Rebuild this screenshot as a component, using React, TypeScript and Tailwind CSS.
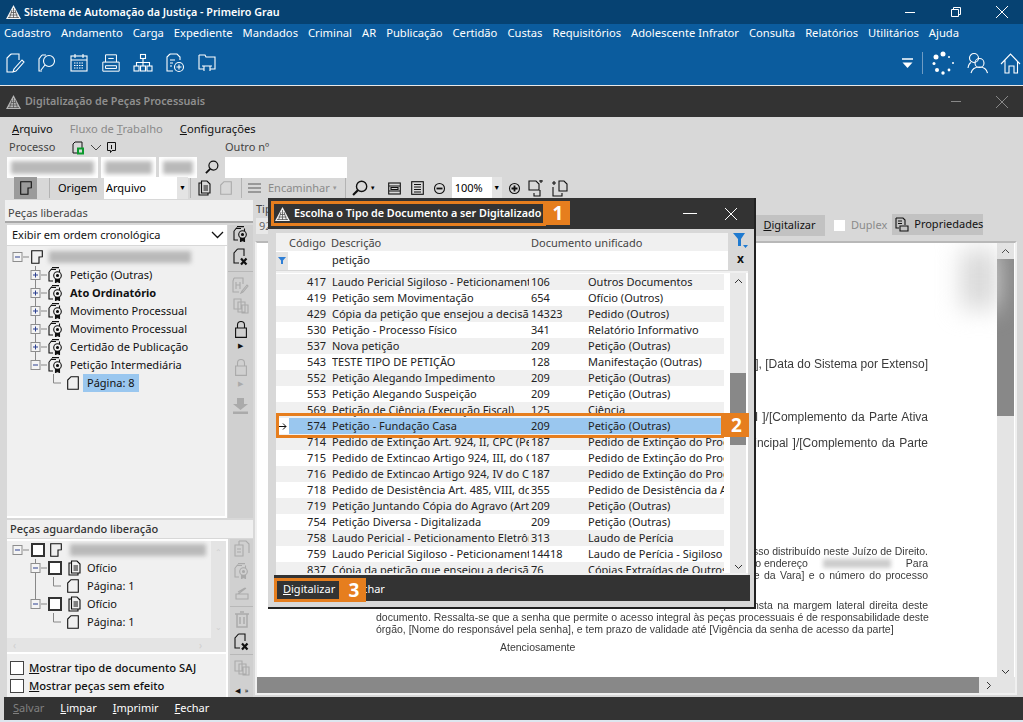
import React from "react";

const ui = "font-['Noto_Sans','Open_Sans',sans-serif]";

function Logo({ dim = false }: { dim?: boolean }) {
  const c = dim ? "#b5b5b5" : "#f2f2f2";
  return (
    <svg width="15" height="14" viewBox="0 0 15 14" className="shrink-0">
      <path d="M7.5 0 15 14H0Z" fill={c} />
      <path d="M5 7.5h5M3.5 10h8M2 12.5h11M6 5l-2.5 8M9 5l2.5 8M7.5 3v10" stroke="#555" strokeWidth="0.8" />
    </svg>
  );
}

function S({ w = 20, h = 20, vb = "0 0 20 20", c = "currentColor", children, sw = 1.1 }: any) {
  return (
    <svg width={w} height={h} viewBox={vb} fill="none" stroke={c} strokeWidth={sw} className="shrink-0">
      {children}
    </svg>
  );
}

const PageIcon = ({ c = "#111" }: { c?: string }) => (
  <S w={12} h={14} vb="0 0 12 14" c={c}>
    <path d="M4 .7h7.3v12.6H.7V4Z" />
  </S>
);
const FoldIcon = ({ c = "#111" }: { c?: string }) => (
  <S w={12} h={14} vb="0 0 12 14" c={c}>
    <path d="M.7.7h10.6v6L8 7v6.300H.7ZM8 7l3.300-.3" />
  </S>
);
const SealIcon = ({ c = "#111", w = 15 }: { c?: string; w?: number }) => (
  <S w={w} h={16} vb="0 0 15 16" c={c} sw={1.1}>
    <path d="M4 .6H11M2.500 2.500H8M1 5V14H5M1 5 4 1.500M11.500 2.500V5" />
    <circle cx="9.500" cy="8.500" r="3.800" />
    <circle cx="9.500" cy="8.500" r="1" fill={c} />
    <path d="M7.500 12v3.500l2-1 2 1V12" fill={c} />
  </S>
);
const StackIcon = () => (
  <S w={13} h={16} vb="0 0 13 16" c="#111" sw={1.1}>
    <path d="M3.500 1H9L12 4V13H3.500ZM3.500 3H1V15H10V13M5.500 6h4.500M5.500 8h4.500M5.500 10h4.500" />
  </S>
);
const DocX = ({ c = "#111" }: { c?: string }) => (
  <S w={16} h={18} vb="0 0 16 18" c={c}>
    <path d="M4.500 1H11V8M4.500 1 1 5V15H6" />
    <path d="M8 10.500l5.500 6M13.500 10.500l-5.500 6" strokeWidth="2.200" />
  </S>
);
const SearchIcon = ({ size = 15 }: { size?: number }) => (
  <S w={size} h={size} vb="0 0 15 15" c="#111" sw={1.3}>
    <circle cx="9" cy="6" r="4.800" />
    <path d="M5.500 9.500 1 14" strokeWidth="2" />
  </S>
);
const Lock = ({ c = "#111" }: { c?: string }) => (
  <S w={12} h={17} vb="0 0 12 17" c={c}>
    <path d="M2.500 7V4a3.500 3.500 0 0 1 7 0v3M.6 7h10.800v9.400H.6Z" />
  </S>
);

const Blur = ({ className }: { className: string }) => (
  <div className={"bg-[#b9b9b9] blur-[2px] " + className} />
);

const Box = ({ open, up, down }: { open: boolean; up?: boolean; down?: boolean }) => (
  <svg width="18" height="18" viewBox="0 0 18 18" fill="none" className="shrink-0">
    {up && <path d="M5.500 0V4" stroke="#888" />}
    {down && <path d="M5.500 14V18" stroke="#888" />}
    <path d="M11 9h6" stroke="#888" />
    <rect x="1" y="4.500" width="9" height="9" fill="#f4f4f4" stroke="#8d8d8d" />
    <path d="M3 9h5" stroke="#2b3f8f" />
    {!open && <path d="M5.500 6.500v5" stroke="#2b3f8f" />}
  </svg>
);

const Elbow = ({ line }: { line?: boolean }) => (
  <svg width="31" height="18" viewBox="0 0 31 18" fill="none" className="shrink-0">
    {line && <path d="M5.500 0V18" stroke="#888" />}
    <path d="M23.500 0V9H31" stroke="#888" />
  </svg>
);

const Check = () => <div className="w-[14px] h-[14px] bg-white border-2 border-[#333] shrink-0" />;

function TopMenu() {
  const items = ["Cadastro","Andamento","Carga","Expediente","Mandados","Criminal","AR","Publicação","Certidão","Custas","Requisitórios","Adolescente Infrator","Consulta","Relatórios","Utilitários","Ajuda"];
  return (
    <div className="h-[19px] bg-[#0b5c9e] flex items-center gap-[10px] pl-[4px] text-white text-[11.200px] whitespace-nowrap">
      {items.map((m) => <span key={m}>{m}</span>)}
    </div>
  );
}

function MainToolbar() {
  return (
    <div className="h-[42px] bg-[#0b5c9e] flex items-center pl-[5px] pr-[2px] pb-[2px] text-white gap-[12px]">
      <S w={20} h={20}><path d="M6 1h8v6M6 1 2 5v14h6M17 7 9 16l-1 3 3-1 8-9Z" /></S>
      <S w={20} h={20}><path d="M5 2h4M5 2 2 6v12h3" /><circle cx="12" cy="8" r="5.500" /><path d="M8 12l-4 5" /></S>
      <S w={20} h={20}><rect x="2" y="3" width="16" height="15" /><path d="M2 7h16M6 1v4M14 1v4" /><path d="M5 10h10M5 12.500h10M5 15h10" strokeDasharray="1.500 1" /></S>
      <S w={20} h={20} vb="0 0 22 22"><path d="M5 10V2h12v8M2 10h18v10H2ZM5 14h12v3H5ZM8 6h6" /></S>
      <S w={20} h={20}><rect x="7.500" y="1.500" width="5" height="4" /><rect x="1" y="13" width="5" height="5" /><rect x="7.500" y="13" width="5" height="5" /><rect x="14" y="13" width="5" height="5" /><path d="M10 5.500v7.500M3.500 13v-3.500h13V13" /></S>
      <S w={20} h={20}><path d="M5 1h7l3 3v3M5 1 2 4v14h6M5 7h5M5 10h3M5 13h2" /><circle cx="14" cy="14" r="4.500" /><path d="M14 11.500v5M11.500 14h5" /></S>
      <S w={20} h={20}><path d="M2 2h6l1 2h9v12h-5M2 2v14h5M7 18v-5h6v5M5 13h10" /></S>
      <div className="flex-1" />
      <S w={14} h={14} vb="0 0 14 14" c="white"><path d="M1 3h11" strokeWidth="1.500" /><path d="M1.500 6.500h10L6.500 12Z" fill="white" stroke="none" /></S>
      <div className="w-px h-[22px] bg-[#6f9cc4] -ml-[5px]" />
      <svg width="24" height="24" viewBox="0 0 24 24" fill="white" className="shrink-0 -ml-[4px]">
        <circle cx="12" cy="3" r="2.500" /><circle cx="5" cy="6" r="2.500" /><circle cx="3" cy="12.500" r="1.500" /><circle cx="6" cy="19" r="2" /><circle cx="12" cy="22" r="1.700" /><circle cx="18" cy="19" r="1.400" /><circle cx="22" cy="12" r="1" /><circle cx="18" cy="6" r="1" />
      </svg>
      <S w={21} h={22} vb="0 0 21 22"><circle cx="7" cy="6" r="4.500" /><circle cx="12.500" cy="11" r="4.500" /><path d="M1 16c.5-3 2-5 3-5.500M4 21c1-4 4-6 8.500-6s7 2 8 6" /></S>
      <S w={21} h={22} vb="0 0 21 22"><path d="M1 12 10.500 2 20 12M5 8.500V21h4v-7h5v7h3.500V9" /></S>
    </div>
  );
}

const Sep = () => <div className="w-px h-[20px] bg-[#b4b4b4] shrink-0" />;

function ZoomDot({ plus }: { plus?: boolean }) {
  return (
    <S w={13} h={13} vb="0 0 13 13" c="#111">
      <circle cx="6.500" cy="6.500" r="5" />
      <path d={plus ? "M3.500 6.500h6M6.500 3.500v6" : "M3.500 6.500h6"} strokeWidth="1.800" />
    </S>
  );
}

function FormArea() {
  return (
    <div className="h-[83px] flex flex-col">
      <div className="h-[23px] flex items-center pl-[12px] gap-[17px] text-[11.200px] text-[#111] pt-[2px]">
        <span><u>A</u>rquivo</span>
        <span className="text-[#8a8a8a]">Fluxo de <u>T</u>rabalho</span>
        <span><u>C</u>onfigurações</span>
      </div>
      <div className="h-[15px] flex items-center pl-[9px] text-[11px] text-[#444]">
        <span className="w-[63px]">Processo</span>
        <svg width="13" height="14" viewBox="0 0 13 14" fill="none" stroke="#111" className="shrink-0">
          <path d="M3 1h7v6M3 1 1 3v9h4" />
          <rect x="6" y="7.500" width="5" height="5" stroke="#0c9a2e" strokeWidth="2" />
        </svg>
        <svg width="13" height="8" viewBox="0 0 13 8" fill="none" stroke="#444" className="ml-[5px]"><path d="M1 1l5 5 5-5" /></svg>
        <svg width="10" height="12" viewBox="0 0 10 12" fill="none" stroke="#111" className="ml-[4px]"><path d="M.5.500h8v8H5l-1.500 2V8.500h-3ZM4.500 3v4" /></svg>
        <span className="ml-[108px]">Outro nº</span>
      </div>
      <div className="h-[22px] flex items-center pl-[7px] mt-[1px]">
        <div className="w-[91px] h-[21px] bg-white overflow-hidden p-[4px]"><Blur className="h-full" /></div>
        <div className="w-[55px] h-[21px] bg-white overflow-hidden p-[4px] ml-[3px]"><Blur className="h-full" /></div>
        <div className="w-[38px] h-[21px] bg-white overflow-hidden p-[4px] ml-[3px]"><Blur className="h-full" /></div>
        <div className="ml-[8px]"><SearchIcon size={14} /></div>
        <div className="w-[122px] h-[21px] bg-white ml-[6px]" />
      </div>
      <div className="h-[22px] flex items-center pl-[14px] text-[11px] -mt-px">
        <div className="w-[23px] h-[22px] bg-[#9b9b9b] flex items-center justify-center"><FoldIcon /></div>
        <div className="ml-[12px]"><Sep /></div>
        <span className="ml-[8px] w-[46px]">Origem</span>
        <div className="w-[84px] h-[22px] bg-white flex items-center pl-[2px] relative">
          Arquivo
          <div className="absolute right-0 top-0 bottom-0 w-[11px] bg-[#e4e4e4] flex items-center justify-center text-[7px]">▼</div>
        </div>
        <div className="ml-[2px]"><Sep /></div>
        <div className="ml-[7px]"><StackIcon /></div>
        <div className="ml-[9px]"><PageIcon c="#aaa" /></div>
        <div className="ml-[9px]"><Sep /></div>
        <svg width="13" height="10" viewBox="0 0 13 10" stroke="#999" strokeWidth="2" className="ml-[6px]"><path d="M0 1h13M0 5h13M0 9h13" /></svg>
        <span className="ml-[7px] text-[#8a8a8a] whitespace-nowrap">Encaminhar</span>
        <span className="text-[6px] text-[#999] ml-[2px]">▼</span>
        <div className="ml-[7px]"><Sep /></div>
        <div className="ml-[6px]"><SearchIcon size={16} /></div>
        <span className="text-[6px] ml-[2px]">▼</span>
        <div className="ml-[12px]"><S w={13} h={13} vb="0 0 13 13" c="#111"><rect x=".7" y="1" width="11.600" height="11" /><path d="M1 4h11M1 9h11M3 5.500h7v2H3Z" /></S></div>
        <div className="ml-[10px]"><S w={13} h={14} vb="0 0 13 14" c="#111"><rect x=".7" y=".7" width="11.600" height="12.600" /><path d="M3 3.500h7M3 6h7M3 8.500h7M3 11h7" /></S></div>
        <div className="ml-[9px]"><ZoomDot /></div>
        <div className="ml-[6px] w-[50px] h-[22px] bg-white flex items-center pl-[3px] relative">
          100%
          <div className="absolute right-0 top-0 bottom-0 w-[10px] bg-[#e4e4e4] flex items-center justify-center text-[7px]">▼</div>
        </div>
        <div className="ml-[6px]"><ZoomDot plus /></div>
        <div className="ml-[7px]"><S w={17} h={17} vb="0 0 17 17" c="#111"><path d="M1 1h7l3 3v6H1ZM12 10v6H6v-3M11 1h4M13 0v3" /></S></div>
        <div className="ml-[6px]"><S w={17} h={17} vb="0 0 17 17" c="#111"><path d="M8 1h5l3 3v7H8ZM1 3h4M3 1v4M2 7v9h9v-3" /></S></div>
      </div>
    </div>
  );
}

const tree = ["Petição (Outras)", "Ato Ordinatório", "Movimento Processual", "Movimento Processual", "Certidão de Publicação", "Petição Intermediária"];

function LeftPanel() {
  return (
    <div className="w-[248px] ml-[5px] flex flex-col text-[11px] text-[#111] shrink-0">
      <div className="h-[23px] bg-[#f0f0f0] border-b-2 border-[#a8a8a8] flex items-center pl-[3px] pt-[5px] text-[#444]">Peças liberadas</div>
      <div className="h-[296px] flex pl-[2px] pt-[2px]">
        <div className="w-[220px] flex flex-col">
          <div className="h-[20px] bg-white flex items-center pl-[5px] justify-between pr-[3px]">
            Exibir em ordem cronológica
            <svg width="13" height="8" viewBox="0 0 13 8" fill="none" stroke="#111" strokeWidth="1.300"><path d="M1 1l5.500 5.500L12 1" /></svg>
          </div>
          <div className="flex-1 bg-[#f0f0f0] border-r-2 border-b-2 border-l-0 border-white pt-[2px] mt-[1px]">
            <div className="h-[18px] flex items-center pl-[5px]">
              <Box open />
              <div className="ml-[1px]"><FoldIcon /></div>
              <Blur className="w-[142px] h-[12px] ml-[6px]" />
            </div>
            {tree.map((t, i) => (
              <div key={i} className="h-[18px] flex items-center pl-[23px]">
                <Box open={i === 5} up down={i < 5} />
                <SealIcon />
                <span className={"ml-[7px] whitespace-nowrap " + (i === 1 ? "font-bold" : "")}>{t}</span>
              </div>
            ))}
            <div className="h-[18px] flex items-center pl-[23px]">
              <Elbow />
              <div className="ml-[6px] -mt-px"><PageIcon /></div>
              <span className="ml-[4px] bg-[#9ac7ef] h-[18px] px-[4px] flex items-center">Página: 8</span>
            </div>
          </div>
        </div>
        <div className="w-[25px] bg-[#d0d0d0] ml-[1px] flex flex-col items-center pt-[1px]">
          <SealIcon />
          <div className="mt-[6px]"><DocX /></div>
          <div className="w-full h-px bg-[#b8b8b8] mt-[5px]" />
          <div className="mt-[5px]"><S w={17} h={17} vb="0 0 17 17" c="#aaa"><path d="M2 1h9v6M2 1 1 4v11h6M4 5v7M8 5v7M4 8h4M15 8l-5 6-1 2 2-1 5-6Z" /></S></div>
          <div className="mt-[4px]"><S w={16} h={16} vb="0 0 16 16" c="#aaa"><path d="M1 1h7v10H1ZM5 4h7v10H5ZM9 7h6v8H9Z" /></S></div>
          <div className="mt-[7px]"><Lock /></div>
          <span className="text-[7px] leading-[8px] mt-[4px]">▶</span>
          <div className="mt-[9px]"><Lock c="#aaa" /></div>
          <span className="text-[7px] leading-[8px] text-[#aaa] mt-[4px]">▶</span>
          <svg width="15" height="16" viewBox="0 0 15 16" fill="#aaa" className="mt-[10px]"><path d="M4 0h7v6h4l-7.500 6L0 6h4ZM0 13.500h15V16H0Z" /></svg>
        </div>
      </div>
      <div className="h-[18px] bg-[#f0f0f0] ml-[2px] flex items-center pl-[3px] pt-[1px] text-[#333] font-medium mt-[2px]">Peças aguardando liberação</div>
      <div className="h-[115px] flex pl-[2px] mt-px">
        <div className="w-[222px] bg-[#e4e4e4] border-2 border-white border-l-0 flex flex-col relative">
          <div className="flex-1 flex">
            <div className="w-[204px] bg-[#f0f0f0] h-[97px]">
              <div className="h-[18px] flex items-center pl-[5px]">
                <Box open />
                <div className="ml-[1px]"><Check /></div>
                <div className="ml-[5px]"><FoldIcon /></div>
                <Blur className="w-[136px] h-[12px] ml-[8px]" />
              </div>
              {[0, 1].map((k) => (
                <React.Fragment key={k}>
                  <div className="h-[18px] flex items-center pl-[23px]">
                    <Box open up down={k === 0} />
                    <Check />
                    <div className="ml-[6px]"><StackIcon /></div>
                    <span className="ml-[6px]">Ofício</span>
                  </div>
                  <div className="h-[18px] flex items-center pl-[23px]">
                    <Elbow line={k === 0} />
                    <div className="ml-[6px] -mt-px"><PageIcon /></div>
                    <span className="ml-[8px]">Página: 1</span>
                  </div>
                </React.Fragment>
              ))}
            </div>
            <div className="flex-1 flex flex-col justify-between items-center py-[5px] text-[#cfcfcf] text-[8px] h-[97px]"><span>⌃</span><span>⌄</span></div>
          </div>
          <div className="h-[16px] flex items-center justify-between px-[6px] text-[#cfcfcf] text-[10px]"><span>‹</span><span className="mr-[18px]">›</span></div>
        </div>
        <div className="w-[23px] bg-[#d0d0d0] ml-[2px] flex flex-col items-center pt-[1px]">
          <S w={16} h={17} vb="0 0 16 17" c="#aaa"><path d="M5 1h7l3 3v9M5 1v4M1 5h8v11H1ZM3 9h4M3 12h4" /></S>
          <div className="mt-[6px]"><SealIcon c="#aaa" /></div>
          <div className="mt-[7px]"><S w={16} h={14} vb="0 0 16 14" c="#aaa"><path d="M2 8h12v5H2ZM4 8l8-6M4 6l7-4" /></S></div>
          <div className="w-full h-px bg-[#b8b8b8] mt-[6px]" />
          <div className="mt-[4px]"><S w={16} h={17} vb="0 0 16 17" c="#aaa"><path d="M1 3h14M3 3v13h10V3M6 1h4M6 6v7M10 6v7" strokeWidth="1.500" /></S></div>
          <div className="mt-[5px]"><DocX /></div>
        </div>
      </div>
      <div className="h-[43px] flex pl-[2px]">
        <div className="w-[222px] bg-[#f0f0f0] border-r-2 border-white pt-[5px] font-medium">
          <div className="h-[18px] flex items-center pl-[3px] gap-[5px]"><div className="w-[14px] h-[14px] bg-white border border-[#444]" /><span className="text-[11.200px]"><u>M</u>ostrar tipo de documento SAJ</span></div>
          <div className="h-[18px] flex items-center pl-[3px] gap-[5px]"><div className="w-[14px] h-[14px] bg-white border border-[#444]" /><span className="text-[11.200px]"><u>M</u>ostrar peças sem efeito</span></div>
        </div>
        <div className="w-[23px] bg-[#d0d0d0] ml-[2px] flex flex-col items-center pt-[5px] border-t border-[#b8b8b8] justify-between pb-[1px]">
          <S w={16} h={16} vb="0 0 16 16" c="#aaa"><path d="M1 1h7v10H1ZM5 4h7v10H5ZM9 7h6v8H9Z" /></S>
          <div className="flex gap-[5px] text-[7px] leading-[10px]"><span>◀</span><span>»</span></div>
        </div>
      </div>
    </div>
  );
}

function RightPanel() {
  return (
    <div className="flex-1 ml-[2px] mr-[6px] flex flex-col text-[11px]">
      <div className="h-[41px] flex pl-[1px] relative">
        <div className="w-[61px] flex flex-col">
          <span className="text-[#444] h-[18px] flex items-center">Tipo</span>
          <div className="h-[16px] bg-[#e8e8e8] text-[#666] pl-[3px] leading-[16px] w-[40px]">92</div>
        </div>
        <div className="ml-[437px] mt-[15px] h-[21px] w-[71px] bg-[#c2c2c2] flex items-center justify-center text-[#111]"><span><u>D</u>igitalizar</span></div>
        <div className="ml-[9px] mt-[20px] w-[11px] h-[11px] bg-white" />
        <span className="ml-[6px] mt-[17px] text-[#8a8a8a]">Duplex</span>
        <div className="ml-[5px] mt-[14px] h-[21px] w-[91px] bg-[#c2c2c2] flex items-center pl-[3px] gap-[5px] text-[#111]">
          <S w={14} h={15} vb="0 0 14 15" c="#111"><path d="M1 1h7l2 2v5M1 1v10h3M3 4h4M3 6.500h4M5 9h8v5H5Z" /></S>
          Propriedades
        </div>
      </div>
      <div className="flex-1 border-2 border-[#f0f0f0] border-t-[#b8b8b8] bg-white flex flex-col overflow-hidden mb-[2px]">
        <div className="flex-1 flex min-h-0">
          <div className="flex-1 relative font-['Liberation_Sans',Arial,sans-serif] text-[#3a3a3a] blur-[0.3px]">
            <div className="absolute right-0 top-[6px] w-[36px] h-[60px] bg-[#d8d8d8] blur-[12px]" />
            <div className="ml-[119px] w-[552px] pt-[114px]">
              <p className="text-right text-[12px] leading-[14px]">Cidade da Vara], [Data do Sistema por Extenso]</p>
              <p className="text-right text-[12px] leading-[14px] mt-[39px] [word-spacing:1px]">[Nome da Parte Ativa Principal ]/[Complemento da Parte Ativa</p>
              <p className="text-right text-[12px] leading-[14px] mt-[12px] [word-spacing:1px]">[Nome da Parte Passiva Principal ]/[Complemento da Parte</p>
              <p className="text-right text-[10.500px] leading-[12px] mt-[95px]">
                Informamos que o presente documento se refere ao processo distribuído neste Juízo de Direito.
              </p>
              <div className="flex justify-end items-center text-[10.500px] leading-[12px]">
                na Comarca, no endereço
                <div className="w-[68px] h-[9px] bg-[#ccc] blur-[2px] mx-[15px]" />
                Para
              </div>
              <p className="text-right text-[10.500px] leading-[12px] [word-spacing:1.500px]">consulta, informe o [Nome da Vara] e o número do processo</p>
              <p className="text-right text-[10.500px] leading-[12px] mt-[18px] [word-spacing:1.500px]">utilizando a senha que consta na margem lateral direita deste</p>
              <p className="text-right whitespace-nowrap text-[10.500px] leading-[12px]">documento. Ressalta-se que a senha que permite o acesso integral às peças processuais é de responsabilidade deste</p>
              <p className="text-[10.500px] leading-[12px] whitespace-nowrap">órgão, [Nome do responsável pela senha], e tem prazo de validade até [Vigência da senha de acesso da parte]</p>
              <p className="text-[10.500px] leading-[12px] mt-[6px] pl-[124px]">Atenciosamente</p>
            </div>
          </div>
          <div className="w-[17px] bg-[#e4e4e4] flex flex-col items-center justify-between pb-[2px] mr-[1px]">
            <div className="w-full flex flex-col items-center">
              <div className="h-[16px] flex items-center"><svg width="9" height="6" viewBox="0 0 9 6" fill="none" stroke="#333"><path d="M1 5l3.500-3.500L8 5" /></svg></div>
              <div className="w-full h-[157px] bg-[#888] mt-[0px]" />
            </div>
            <svg width="9" height="6" viewBox="0 0 9 6" fill="none" stroke="#333"><path d="M1 1l3.500 3.500L8 1" /></svg>
          </div>
        </div>
        <div className="h-[16px] flex bg-[#e4e4e4]">
          <div className="w-[722px] bg-[#888]" />
          <div className="flex-1 flex items-center justify-center pr-[16px]"><svg width="6" height="9" viewBox="0 0 6 9" fill="none" stroke="#333"><path d="M1 1l3.500 3.500L1 8" /></svg></div>
        </div>
      </div>
    </div>
  );
}

const rows: [string, string, string, string][] = [
  ["417","Laudo Pericial Sigiloso - Peticionamento Eletrônico","106","Outros Documentos"],
  ["419","Petição sem Movimentação","654","Ofício (Outros)"],
  ["429","Cópia da petição que ensejou a decisão agravada","14323","Pedido (Outros)"],
  ["530","Petição - Processo Físico","341","Relatório Informativo"],
  ["537","Nova petição","209","Petição (Outras)"],
  ["543","TESTE TIPO DE PETIÇÃO","128","Manifestação (Outras)"],
  ["552","Petição Alegando Impedimento","209","Petição (Outras)"],
  ["553","Petição Alegando Suspeição","209","Petição (Outras)"],
  ["569","Petição de Ciência (Execução Fiscal)","125","Ciência"],
  ["574","Petição - Fundação Casa","209","Petição (Outras)"],
  ["714","Pedido de Extinção Art. 924, II, CPC (Petição)","187","Pedido de Extinção do Processo"],
  ["715","Pedido de Extincao Artigo 924, III, do CPC","187","Pedido de Extinção do Processo"],
  ["716","Pedido de Extincao Artigo 924, IV do CPC","187","Pedido de Extinção do Processo"],
  ["718","Pedido de Desistência Art. 485, VIII, do CPC","355","Pedido de Desistência da Ação"],
  ["719","Petição Juntando Cópia do Agravo (Art. 1018)","209","Petição (Outras)"],
  ["754","Petição Diversa - Digitalizada","209","Petição (Outras)"],
  ["758","Laudo Pericial - Peticionamento Eletrônico","313","Laudo de Perícia"],
  ["759","Laudo Pericial Sigiloso - Peticionamento Eletrônico","14418","Laudo de Perícia - Sigiloso"],
  ["837","Cópia da petição que ensejou a decisão agravada","76","Cópias Extraídas de Outros Autos"],
];

function Modal() {
  return (
    <div className="absolute left-[268px] top-[198px] w-[488px] h-[411px] bg-[#d8d8d8] border-r-2 border-b-2 border-[#222] flex flex-col text-[11px] text-[#222]">
      <div className="h-[31px] bg-[#333] flex items-center pl-[7px] pr-[17px] text-white shrink-0">
        <Logo />
        <span className="ml-[4px] font-semibold text-[10.750px] whitespace-nowrap">Escolha o Tipo de Documento a ser Digitalizado</span>
        <div className="flex-1" />
        <div className="w-[14px] h-px bg-white mr-[28px]" />
        <svg width="12" height="12" viewBox="0 0 12 12" stroke="white"><path d="M0 0l12 12M12 0 0 12" /></svg>
      </div>
      <div className="flex pl-[8px] pt-[4px] pr-[5px] shrink-0">
        <div className="w-[452px] h-[37px] flex flex-col bg-white">
          <div className="h-[18px] bg-[#f0f0f0] flex items-center pl-[13px] pt-[3px] text-[#444]">
            <span className="w-[42px]">Código</span>
            <span className="w-[200px]">Descrição</span>
            <span>Documento unificado</span>
          </div>
          <div className="flex-1 flex items-center">
            <div className="w-[12px] h-[18px] bg-[#e4e4e4] flex items-center justify-center"><svg width="8" height="7" viewBox="0 0 8 7" fill="#2f7fd6"><path d="M0 0h8L5 3.500V7H3V3.500Z" /></svg></div>
            <span className="ml-[44px]">petição</span>
          </div>
        </div>
        <div className="flex-1 flex flex-col items-center pl-[4px]">
          <svg width="15" height="16" viewBox="0 0 15 16" fill="#1f7ad0"><path d="M0 0h12L8 6v7H5V6ZM10 12h5l-2.500 3Z" /></svg>
          <span className="font-bold text-[12px] leading-[12px] mt-[4px] text-[#111]">x</span>
        </div>
      </div>
      <div className="h-[304px] mt-[1px] ml-[8px] mr-[6px] bg-white border-2 border-[#f0f0f0] border-l-0 border-r-0 flex overflow-hidden shrink-0">
        <div className="flex-1 min-w-0 flex flex-col pr-[6px] mt-[1px]">
          {rows.map((r, i) => {
            const sel = r[0] === "574";
            return (
              <div key={r[0]} className="h-[16px] flex items-center shrink-0 leading-[16px] whitespace-nowrap">
                <div className={"w-[13px] h-full shrink-0 flex items-center justify-center " + (i % 2 === 0 && !sel ? "bg-[#f0f0f0]" : "bg-white")}>
                  {sel && <svg width="9" height="7" viewBox="0 0 9 7" fill="none" stroke="#111"><path d="M0 3.500h8M5 .5l3 3-3 3" /></svg>}
                </div>
                <div className={"flex-1 flex h-full items-center min-w-0 " + (sel ? "bg-[#9ac7ef]" : i % 2 === 0 ? "bg-[#f0f0f0]" : "bg-white")}>
                  <span className="w-[37px] text-right shrink-0">{r[0]}</span>
                  <span className="w-[197px] ml-[6px] mr-[2px] shrink-0 overflow-hidden">{r[1]}</span>
                  <span className="w-[57px] shrink-0">{r[2]}</span>
                  <span className="overflow-hidden min-w-0 flex-1">{r[3]}</span>
                </div>
              </div>
            );
          })}
        </div>
        <div className="w-[16px] bg-[#e8e8e8] mr-[2px] flex flex-col items-center justify-between pb-[3px] shrink-0">
          <div className="w-full flex flex-col items-center">
            <div className="h-[16px] flex items-center"><svg width="9" height="6" viewBox="0 0 9 6" fill="none" stroke="#333"><path d="M1 5l3.500-3.500L8 5" /></svg></div>
            <div className="w-full h-[72px] bg-[#888] mt-[84px]" />
          </div>
          <svg width="9" height="6" viewBox="0 0 9 6" fill="none" stroke="#333"><path d="M1 1l3.500 3.500L8 1" /></svg>
        </div>
      </div>
      <div className="h-[26px] ml-[6px] mr-[4px] bg-[#333] flex items-center pl-[9px] pt-[2px] gap-[15px] text-white shrink-0">
        <span><u>D</u>igitalizar</span>
        <span><u>F</u>echar</span>
      </div>
    </div>
  );
}

function Callouts() {
  const badge = "absolute bg-[#e67e1e] text-white font-bold text-[19px] flex items-center justify-center font-['Open_Sans',sans-serif]";
  const ring = "absolute border-[3px] border-[#e67e1e]";
  return (
    <>
      <div className={ring + " left-[271px] top-[201px] w-[275px] h-[25px]"} />
      <div className={badge + " left-[546px] top-[201px] w-[24px] h-[24px]"}>1</div>
      <div className={ring + " left-[276px] top-[413px] w-[448px] h-[25px]"} />
      <div className={badge + " left-[724px] top-[413px] w-[25px] h-[24px]"}>2</div>
      <div className={ring + " left-[274px] top-[578px] w-[68px] h-[24px]"} />
      <div className={badge + " left-[342px] top-[578px] w-[24px] h-[24px]"}>3</div>
    </>
  );
}

export default function App() {
  return (
    <div className={"relative w-[1023px] h-[722px] overflow-hidden bg-[#d8d8d8] flex flex-col " + ui}>
      <div className="h-[24px] bg-[#064272] flex items-center pl-[6px] text-white shrink-0">
        <Logo />
        <span className="ml-[3px] font-semibold text-[10.750px] whitespace-nowrap">Sistema de Automação da Justiça - Primeiro Grau</span>
        <div className="flex-1" />
        <div className="w-[10px] h-px bg-white mr-[36px]" />
        <svg width="10" height="10" viewBox="0 0 10 10" fill="none" stroke="white" className="mr-[35px]"><path d="M.5 2.500h7v7h-7ZM2.500 2.500v-2h7v7h-2" /></svg>
        <svg width="12" height="12" viewBox="0 0 12 12" stroke="white" className="mr-[15px]"><path d="M0 0l12 12M12 0 0 12" /></svg>
      </div>
      <TopMenu />
      <MainToolbar />
      <div className="h-px bg-[#e8e8e8] shrink-0" />
      <div className="h-[31px] bg-[#333] flex items-center pl-[6px] pr-[15px] shrink-0">
        <Logo dim />
        <span className="ml-[4px] font-semibold text-[10.750px] text-[#8f8f8f] whitespace-nowrap">Digitalização de Peças Processuais</span>
        <div className="flex-1" />
        <div className="w-[10px] h-px bg-[#888] mr-[35px]" />
        <svg width="12" height="12" viewBox="0 0 12 12" stroke="#888"><path d="M0 0l12 12M12 0 0 12" /></svg>
      </div>
      <FormArea />
      <div className="flex-1 flex min-h-0">
        <LeftPanel />
        <RightPanel />
      </div>
      <div className="h-[23px] bg-[#333] flex items-center pl-[13px] text-[11px] text-white gap-[16px] shrink-0 ml-[4px]">
        <span className="text-[#808080] -ml-[4px]"><u>S</u>alvar</span>
        <span><u>L</u>impar</span>
        <span><u>I</u>mprimir</span>
        <span><u>F</u>echar</span>
      </div>
      <div className="h-[2px] bg-[#dde6ef] shrink-0" />
      <Modal />
      <Callouts />
    </div>
  );
}
